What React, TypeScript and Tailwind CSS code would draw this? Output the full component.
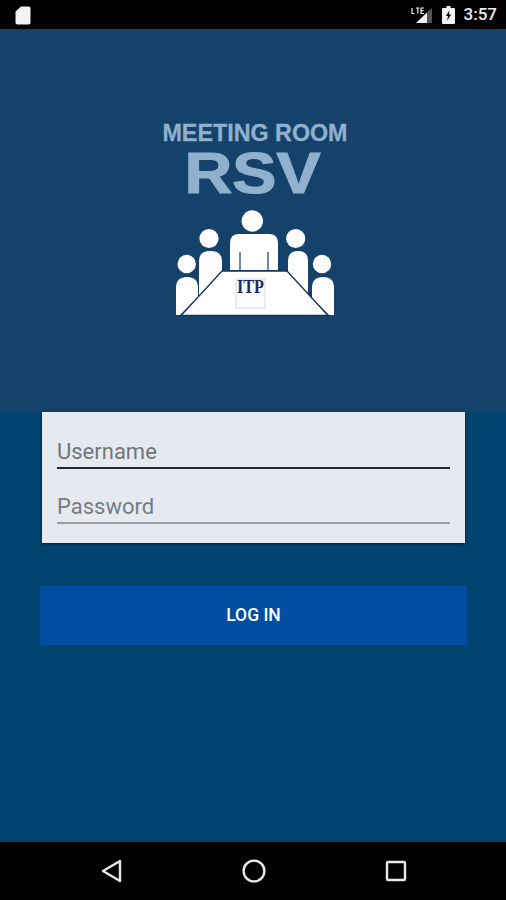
import React from 'react';

const StatusBar: React.FC = () => (
  <div className="h-[29px] bg-black flex items-center pl-[15px] pr-[9px]">
    <svg width="16" height="19" viewBox="0 0 16 19" className="mt-[1px]">
      <path d="M6 0.5 H13.5 Q15.5 0.5 15.5 2.5 V16.5 Q15.5 18.5 13.5 18.5 H2.5 Q0.5 18.5 0.5 16.5 V5.5 Z" fill="#f2f2f2" />
    </svg>
    <div className="ml-auto flex items-center">
      <svg width="22" height="17" viewBox="0 0 22 17" className="mt-[1px]">
        <path d="M21 1 V16 H16 V5.5 Z" fill="#555" />
        <path d="M16 5.5 V16 H5 Z" fill="#f2f2f2" />
        <path d="M1 1 V6.5 H3.5 M5 1 H8.5 M6.8 1 V6.5 M10 1 V6.5 H13 M10 1 H13 M10 3.7 H12.5" stroke="#f2f2f2" strokeWidth="1.2" fill="none" />
      </svg>
      <svg width="13" height="18" viewBox="0 0 13 18" className="ml-[9px] mt-[1px]">
        <path d="M4.5 0 H8.5 V2 H12 Q13 2 13 3 V17 Q13 18 12 18 H1 Q0 18 0 17 V3 Q0 2 1 2 H4.5 Z" fill="#f2f2f2" />
        <path d="M7.5 4.5 L3.8 10 H6 L5.2 14.5 L9.2 8.5 H6.8 Z" fill="#000" />
      </svg>
      <span className="ml-[9px] text-[#ededed] text-[17px] font-medium font-['Roboto',sans-serif] leading-none">3:57</span>
    </div>
  </div>
);

const Logo: React.FC = () => (
  <svg width="160" height="108" viewBox="176 209 160 108" className="block ml-[5px] mt-[15px]">
    <g fill="#fff">
      <circle cx="252.3" cy="221" r="10.7" />
      <path d="M230 270 V243 Q230 234 239 234 H269 Q278 234 278 243 V270 Z" />
      <circle cx="209" cy="238.5" r="9.6" />
      <path d="M199 296 V261 Q199 251 210 251 Q222 251 222 261 V272 Z" />
      <circle cx="186.7" cy="264" r="9.2" />
      <path d="M176 315 V288 Q176 277 187 277 Q198 277 198 288 V297 L180 315 Z" />
      <circle cx="295.7" cy="238.5" r="9.6" />
      <path d="M308 294 V261 Q308 251 298 251 Q288 251 288 261 V272 Z" />
      <circle cx="322" cy="264" r="9.2" />
      <path d="M334 315 V288 Q334 277 323 277 Q312 277 312 288 V298 L329 315 Z" />
    </g>
    <path d="M240 252 V270 M268 252 V270" stroke="#17406a" strokeWidth="1.2" />
    <path d="M222 271 H287 L328 315.5 H181 Z" fill="#fff" stroke="#14305f" strokeWidth="1.3" />
    <rect x="236" y="279" width="29" height="29" fill="#fdfdfd" stroke="#d5d8dc" strokeWidth="1" />
    <text x="237" y="293" textLength="27" lengthAdjust="spacingAndGlyphs" fontFamily="'Liberation Serif', serif" fontWeight="700" fontSize="19.5" fill="#1b2a5e">ITP</text>
  </svg>
);

const App: React.FC = () => {
  return (
    <div className="w-[506px] h-[900px] flex flex-col bg-black font-['Roboto',sans-serif] overflow-hidden">
      <StatusBar />

      {/* Header with logo */}
      <div className="h-[383px] bg-[#14426a] flex flex-col items-center pt-[94px]">
        <div className="ml-[4px] text-[23.3px] leading-[20px] font-bold font-['Liberation_Sans',sans-serif] text-[#8fb1cd] whitespace-nowrap [-webkit-text-stroke:0.3px_#8fb1cd]">
          MEETING ROOM
        </div>
        <div className="-ml-[1px] mt-[10px] text-[57px] leading-[41px] font-bold font-['Liberation_Sans',sans-serif] text-[#8fb1cd] scale-x-[1.16] [-webkit-text-stroke:1.2px_#8fb1cd]">
          RSV
        </div>
        <Logo />
      </div>

      {/* Login form */}
      <div className="flex-1 bg-[#00436f] pl-[40px] pr-[39px]">
        <div className="mx-[2px] h-[131px] bg-[#e6eaf0] px-[15px] pt-[24px] shadow-[0_1px_3px_rgba(0,0,0,0.6)]">
          <div className="h-[33px] border-b-2 border-[#1e2a30] text-[22px] leading-[31px] text-[#70767b]">Username</div>
          <div className="mt-[22px] h-[33px] border-b-2 border-[#9a9fa3] text-[22px] leading-[31px] text-[#767c80]">Password</div>
        </div>
        <button className="mt-[43px] w-full h-[59px] bg-[#014ea0] text-white text-[17.5px] font-medium font-['Roboto',sans-serif]">
          LOG IN
        </button>
      </div>

      {/* Nav bar */}
      <div className="h-[58px] bg-black relative flex items-center">
        <div className="flex-1 flex pl-[100px]">
          <svg width="24" height="26" viewBox="0 0 24 26">
            <path d="M20 3 V23 L3 13 Z" fill="none" stroke="#e8e8e8" strokeWidth="2.4" strokeLinejoin="round" />
          </svg>
          <svg width="26" height="26" viewBox="0 0 26 26" className="ml-[117px]">
            <circle cx="13" cy="13" r="10.4" fill="none" stroke="#e8e8e8" strokeWidth="2.4" />
          </svg>
          <svg width="24" height="24" viewBox="0 0 24 24" className="ml-[117px] mt-[1px]">
            <rect x="3" y="3" width="18" height="18" rx="1" fill="none" stroke="#e8e8e8" strokeWidth="2.4" />
          </svg>
        </div>
      </div>
    </div>
  );
};

export default App;
